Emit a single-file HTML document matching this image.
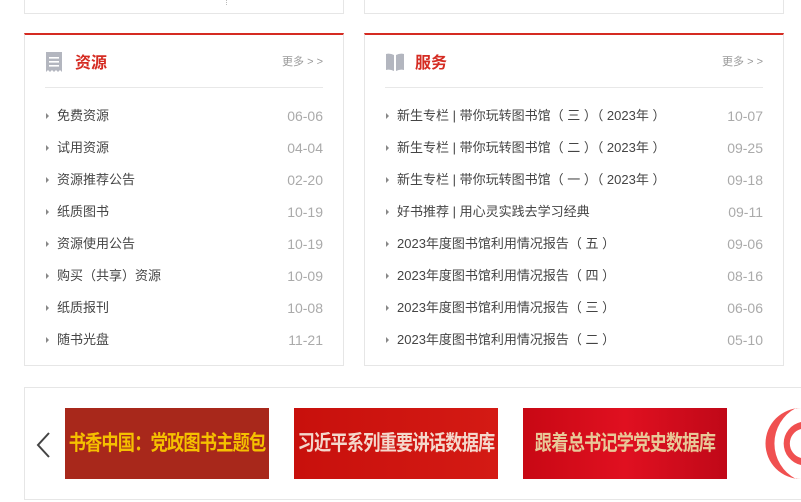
<!DOCTYPE html>
<html><head><meta charset="utf-8"><style>
*{margin:0;padding:0;box-sizing:border-box}
body{width:801px;height:502px;background:#fff;position:relative;overflow:hidden;font-family:"Liberation Sans","Noto Sans CJK SC",sans-serif}
.box{position:absolute;border:1px solid #e6e6e6;background:#fff}
.panel{border-top:2px solid #d52b22}
.hd{position:absolute;left:20px;right:20px;top:0;height:53px;border-bottom:1px solid #e8e8e8}
.hd .t{position:absolute;left:30px;top:14px;font-size:16px;font-weight:bold;color:#d52b22}
.hd .m{position:absolute;right:0;top:18px;font-size:11px;color:#999}
.hd svg{position:absolute;left:0;top:17px}
ul{position:absolute;left:20px;right:20px;top:71px;list-style:none}
li{height:32px;position:relative;font-size:13px;color:#444;padding-left:12px;line-height:20px}
li:before{content:"";position:absolute;left:1px;top:7px;border-left:3px solid #888;border-top:3px solid transparent;border-bottom:3px solid transparent}
li span{position:absolute;right:0;top:0;color:#aaa;font-size:14px}
.bn{position:absolute;top:408px;width:204px;height:71px;overflow:hidden}
.bn b{display:block;width:250px;margin-left:-23px;text-align:center;line-height:71px;font-size:21px;white-space:nowrap;transform:scaleX(0.82);letter-spacing:-1px}
</style></head><body>
<div class="box" style="left:24px;top:-2px;width:320px;height:16px"><div style="position:absolute;left:201px;top:0;height:6px;border-left:1px dotted #bbb"></div></div>
<div class="box" style="left:364px;top:-2px;width:420px;height:16px"></div>

<div class="box panel" style="left:24px;top:33px;width:320px;height:333px">
<div class="hd"><svg width="18" height="20" viewBox="0 0 18 20"><path d="M1 0h16v20l-2-2-2 2-2-2-2 2-2-2-2 2-2-2-2 2z" fill="#b3b6bf"/><rect x="4" y="5" width="10" height="1.6" fill="#fff"/><rect x="4" y="9" width="10" height="1.6" fill="#fff"/><rect x="4" y="13" width="10" height="1.6" fill="#fff"/></svg><div class="t">资源</div><div class="m">更多 &gt; &gt;</div></div>
<ul>
<li>免费资源<span>06-06</span></li><li>试用资源<span>04-04</span></li><li>资源推荐公告<span>02-20</span></li><li>纸质图书<span>10-19</span></li><li>资源使用公告<span>10-19</span></li><li>购买（共享）资源<span>10-09</span></li><li>纸质报刊<span>10-08</span></li><li>随书光盘<span>11-21</span></li>
</ul></div>

<div class="box panel" style="left:364px;top:33px;width:420px;height:333px">
<div class="hd"><svg width="20" height="20" viewBox="0 0 20 20"><path d="M1 2q4-1 8 1v16q-4-2-8-1z M11 3q4-2 8-1v16q-4-1-8 1z" fill="#b3b6bf"/></svg><div class="t">服务</div><div class="m">更多 &gt; &gt;</div></div>
<ul>
<li>新生专栏 | 带你玩转图书馆（ 三 ）（ 2023年 ）<span>10-07</span></li><li>新生专栏 | 带你玩转图书馆（ 二 ）（ 2023年 ）<span>09-25</span></li><li>新生专栏 | 带你玩转图书馆（ 一 ）（ 2023年 ）<span>09-18</span></li><li>好书推荐 | 用心灵实践去学习经典<span>09-11</span></li><li>2023年度图书馆利用情况报告（ 五 ）<span>09-06</span></li><li>2023年度图书馆利用情况报告（ 四 ）<span>08-16</span></li><li>2023年度图书馆利用情况报告（ 三 ）<span>06-06</span></li><li>2023年度图书馆利用情况报告（ 二 ）<span>05-10</span></li>
</ul></div>

<div class="box" style="left:24px;top:387px;width:800px;height:113px"></div>
<svg style="position:absolute;left:35px;top:432px" width="16" height="26" viewBox="0 0 16 26"><path d="M14 1L3 13l11 12" fill="none" stroke="#444" stroke-width="2"/></svg>
<div class="bn" style="left:65px;background:#a8281b;color:#f5c000"><b>书香中国：党政图书主题包</b></div>
<div class="bn" style="left:294px;background:linear-gradient(90deg,#c8100c,#d41a14);color:#f4d8cc"><b>习近平系列重要讲话数据库</b></div>
<div class="bn" style="left:523px;background:linear-gradient(90deg,#c80814,#e01020,#c00818);color:#e8c898"><b>跟着总书记学党史数据库</b></div>
<svg style="position:absolute;left:756px;top:408px" width="45" height="71" viewBox="0 0 45 71"><path d="M40 0A40 40 0 0 0 40 71L45 71A35 35 0 0 1 45 0z" fill="#f05050"/><path d="M45 14A22 22 0 0 0 45 57L45 50A15 15 0 0 1 45 21z" fill="#f05050"/></svg>
</body></html>
